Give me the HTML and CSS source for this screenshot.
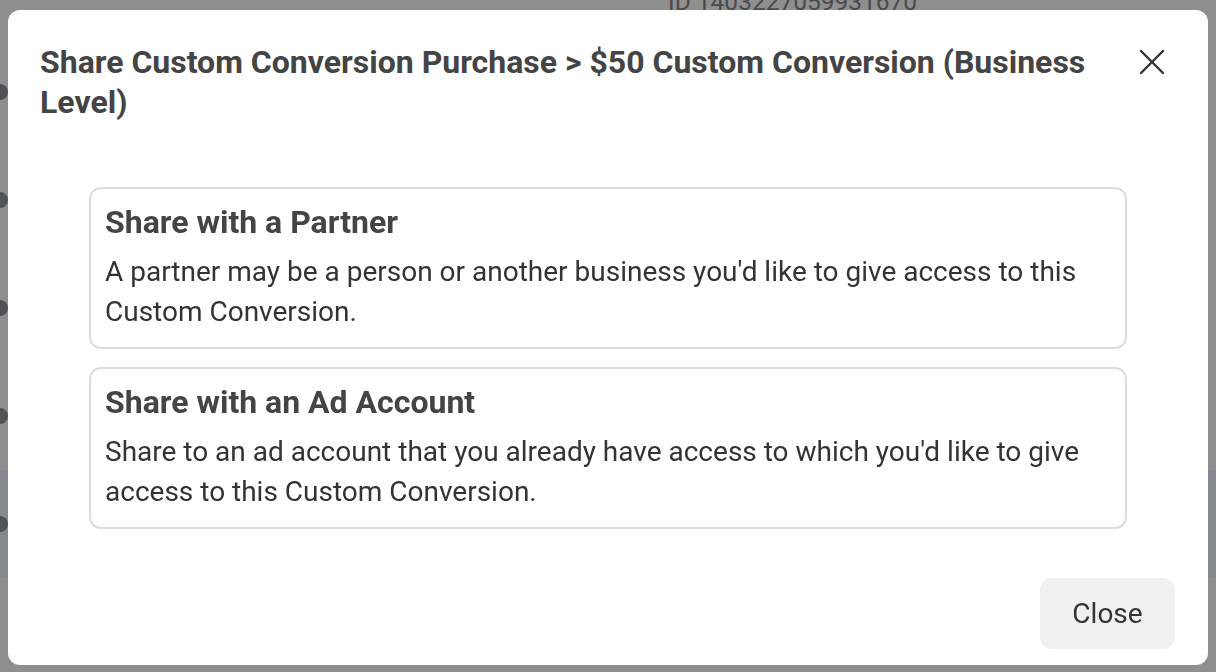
FILE: index.html
```html
<!DOCTYPE html>
<html lang="en">
<head>
  <meta charset="UTF-8">
  <meta name="viewport" content="width=device-width, initial-scale=1.0">
  <title>Share Custom Conversion</title>
  <link rel="stylesheet" href="styles.css">
</head>
<body>

<div class="page">
  <div class="page-id">ID 1403227059931670</div>
  <div class="page-row"><span class="dot"></span></div>
  <div class="page-row"><span class="dot"></span></div>
  <div class="page-row"><span class="dot"></span></div>
  <div class="page-row"><span class="dot"></span></div>
  <div class="page-row band"><span class="dot"></span></div>
  <div class="page-row"></div>
</div>

<div class="overlay">
  <div class="modal">
    <div class="modal-header">
      <h2 class="modal-title">Share Custom Conversion Purchase &gt; $50 Custom Conversion (Business Level)</h2>
      <button class="icon-close" aria-label="Close">
        <svg width="26" height="26" viewBox="0 0 26 26">
          <path d="M2 2 L24 24 M24 2 L2 24" stroke="#333" stroke-width="2.4" stroke-linecap="round" fill="none"/>
        </svg>
      </button>
    </div>

    <div class="modal-body">
      <div class="option">
        <h3>Share with a Partner</h3>
        <p>A partner may be a person or another business you'd like to give access to this Custom Conversion.</p>
      </div>
      <div class="option">
        <h3>Share with an Ad Account</h3>
        <p>Share to an ad account that you already have access to which you'd like to give access to this Custom Conversion.</p>
      </div>
    </div>

    <div class="modal-footer">
      <button class="btn">Close</button>
    </div>
  </div>
</div>

</body>
</html>
```

FILE: styles.css
```css
* {
  box-sizing: border-box;
  margin: 0;
  padding: 0;
  font-family: Roboto, 'Liberation Sans', Arial, sans-serif;
}

body {
  background: #8f8f8f;
  width: 1216px;
  height: 672px;
  overflow: hidden;
}

/* page behind the dialog */
.page {
  display: flex;
  flex-direction: column;
}

.page-id {
  height: 51px;
  margin-top: -13px;
  padding-left: 668px;
  font-size: 24.5px;
  line-height: 30px;
  color: #4a4a4a;
}

.page-row {
  height: 108px;
  display: flex;
  align-items: center;
}

.page-row.band {
  background: #878990;
}

.dot {
  width: 16px;
  height: 16px;
  border-radius: 50%;
  background: #4f5358;
  margin-left: -8px;
}

.overlay {
  position: fixed;
  inset: 0;
  padding: 10px 8px 7px 8px;
}

.modal {
  background: #fff;
  border-radius: 12px;
  height: 655px;
  display: flex;
  flex-direction: column;
}

.modal-header {
  display: flex;
  align-items: flex-start;
  gap: 40px;
  padding: 32px 36px 0 32px;
}

.modal-title {
  flex: 1;
  font-size: 32px;
  line-height: 40px;
  font-weight: 700;
  color: #444;
}

.icon-close {
  border: none;
  background: none;
  width: 40px;
  height: 40px;
  display: flex;
  align-items: center;
  justify-content: center;
}

.modal-body {
  padding: 65px 81px 0 81px;
  display: flex;
  flex-direction: column;
  gap: 18px;
}

.option {
  border: 2px solid #dcdcdc;
  border-radius: 12px;
  padding: 14px 14px 15px 14px;
}

.option h3 {
  font-size: 32px;
  line-height: 38px;
  font-weight: 700;
  color: #444;
  margin-bottom: 11px;
}

.option p {
  font-size: 28px;
  line-height: 40px;
  color: #333;
}

.modal-footer {
  margin-top: auto;
  display: flex;
  justify-content: flex-end;
  padding: 0 33px 16px 0;
}

.btn {
  border: none;
  background: #f0f0f0;
  border-radius: 12px;
  width: 135px;
  height: 71px;
  font-size: 28px;
  color: #333;
}
```
